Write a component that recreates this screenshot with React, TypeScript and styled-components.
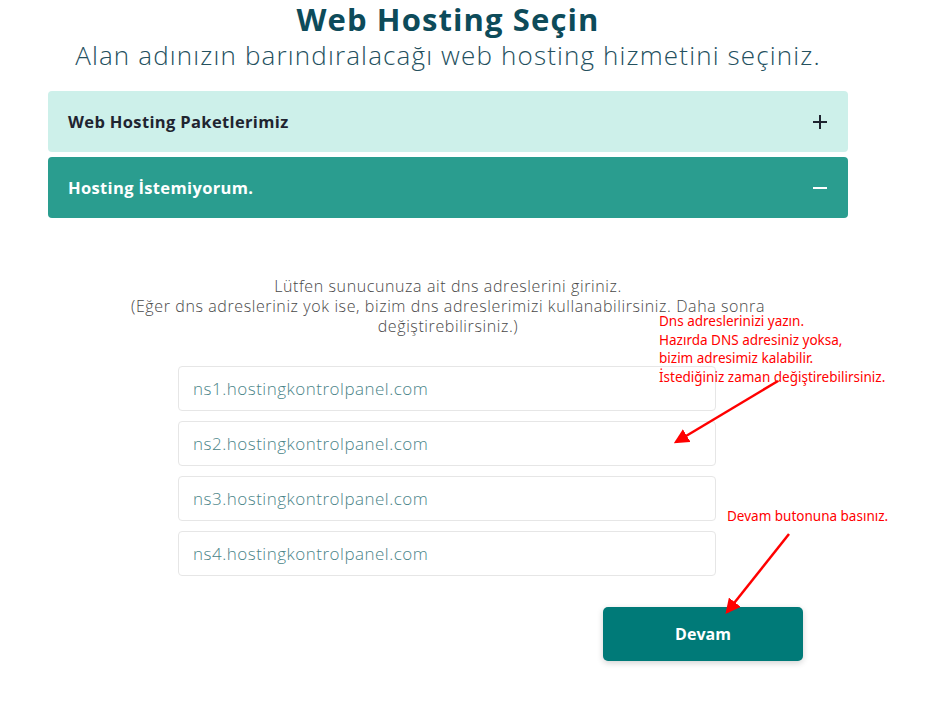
import styled, { createGlobalStyle } from "styled-components";
import { FC } from "react";

const GlobalStyle = createGlobalStyle`
  * {
    box-sizing: border-box;
  }

  body {
    margin: 0;
    background: #ffffff;
    font-family: "Open Sans", "Noto Sans", sans-serif;
  }
`;

const servers = [
  "ns1.hostingkontrolpanel.com",
  "ns2.hostingkontrolpanel.com",
  "ns3.hostingkontrolpanel.com",
  "ns4.hostingkontrolpanel.com",
];

interface PanelProps {
  title: string;
  open?: boolean;
}

const PanelHeader: FC<PanelProps> = ({ title, open }) => (
  <Panel $open={open}>
    <PanelTitle>{title}</PanelTitle>
    <svg width="16" height="16" viewBox="0 0 16 16">
      <path d="M1 8h14" stroke="currentColor" strokeWidth="2" />
      {!open && <path d="M8 1v14" stroke="currentColor" strokeWidth="2" />}
    </svg>
  </Panel>
);

const App = () => {
  return (
    <>
      <GlobalStyle />
      <Page>
        <Heading>Web Hosting Seçin</Heading>
        <SubHeading>Alan adınızın barındıralacağı web hosting hizmetini seçiniz.</SubHeading>

        <Accordion>
          <PanelHeader title="Web Hosting Paketlerimiz" />
          <PanelHeader title="Hosting İstemiyorum." open />
        </Accordion>

        <Body>
          <Info>
            Lütfen sunucunuza ait dns adreslerini giriniz.
            <br />
            (Eğer dns adresleriniz yok ise, bizim dns adreslerimizi kullanabilirsiniz. Daha sonra
            değiştirebilirsiniz.)
          </Info>

          <Fields>
            {servers.map((server) => (
              <Field key={server} defaultValue={server} />
            ))}
          </Fields>

          <Actions>
            <Button>Devam</Button>
          </Actions>
        </Body>

        <Note $top={312} $left={659}>
          Dns adreslerinizi yazın.
          <br />
          Hazırda DNS adresiniz yoksa,
          <br />
          bizim adresimiz kalabilir.
          <br />
          İstediğiniz zaman değiştirebilirsiniz.
        </Note>
        <Note $top={507} $left={727}>
          Devam butonuna basınız.
        </Note>

        <Arrows width="925" height="706" viewBox="0 0 925 706">
          <defs>
            <marker id="head" markerWidth="6" markerHeight="6" refX="5" refY="3" orient="auto">
              <path d="M0 0L6 3L0 6z" fill="#ff0000" />
            </marker>
          </defs>
          <line x1="778" y1="381" x2="676" y2="442" stroke="#ff0000" strokeWidth="2.5" markerEnd="url(#head)" />
          <line x1="789" y1="534" x2="727" y2="612" stroke="#ff0000" strokeWidth="2.5" markerEnd="url(#head)" />
        </Arrows>
      </Page>
    </>
  );
};

export default App;

const Page = styled.div`
  position: relative;
  width: 925px;
  min-height: 706px;
  padding: 0 77px 0 48px;
`;

const Heading = styled.h1`
  margin: 0;
  padding-top: 2px;
  text-align: center;
  font-size: 31px;
  line-height: 34px;
  font-weight: 700;
  letter-spacing: 1.1px;
  color: #0d4b5a;
`;

const SubHeading = styled.p`
  margin: 2px 0 0;
  text-align: center;
  font-size: 26px;
  line-height: 34px;
  font-weight: 300;
  letter-spacing: 1.15px;
  color: #24505e;
  white-space: nowrap;
`;

const Accordion = styled.div`
  margin-top: 19px;
  display: flex;
  flex-direction: column;
  gap: 5px;
`;

const Panel = styled.div<{ $open?: boolean }>`
  display: flex;
  align-items: center;
  justify-content: space-between;
  height: 61px;
  padding: 0 20px;
  border-radius: 4px;
  background: ${({ $open }) => ($open ? "#2a9d8f" : "#cdf0ea")};
  color: ${({ $open }) => ($open ? "#ffffff" : "#1f2430")};
`;

const PanelTitle = styled.span`
  font-size: 16.5px;
  font-weight: 700;
  letter-spacing: 0.35px;
`;

const Body = styled.div`
  display: flex;
  flex-direction: column;
  align-items: center;
  padding-top: 58px;
`;

const Info = styled.p`
  margin: 0;
  width: 660px;
  text-align: center;
  font-size: 16px;
  line-height: 20px;
  font-weight: 300;
  letter-spacing: 0.6px;
  color: #484848;
`;

const Fields = styled.div`
  margin-top: 30px;
  display: flex;
  flex-direction: column;
  gap: 10px;
  width: 538px;
  margin-left: -2px;
`;

const Field = styled.input`
  height: 45px;
  padding: 0 14px;
  border: 1px solid #e6e6e6;
  border-radius: 4px;
  font-family: "Open Sans", "Noto Sans", sans-serif;
  font-size: 17px;
  font-weight: 300;
  letter-spacing: 0.5px;
  color: #4a8488;
  outline: none;
`;

const Actions = styled.div`
  margin-top: 31px;
  width: 800px;
  display: flex;
  justify-content: flex-end;
  padding-right: 45px;
`;

const Button = styled.button`
  width: 200px;
  height: 54px;
  border: none;
  border-radius: 5px;
  background: #007a78;
  color: #ffffff;
  font-family: "Open Sans", "Noto Sans", sans-serif;
  font-size: 16px;
  font-weight: 700;
  box-shadow: 0 2px 6px rgba(0, 0, 0, 0.18);
  cursor: pointer;
`;

const Note = styled.div<{ $top: number; $left: number }>`
  position: absolute;
  top: ${({ $top }) => $top}px;
  left: ${({ $left }) => $left}px;
  font-family: "Noto Sans", sans-serif;
  font-size: 13.5px;
  line-height: 18.7px;
  color: #ff0000;
  white-space: nowrap;
`;

const Arrows = styled.svg`
  position: absolute;
  top: 0;
  left: 0;
  pointer-events: none;
`;
